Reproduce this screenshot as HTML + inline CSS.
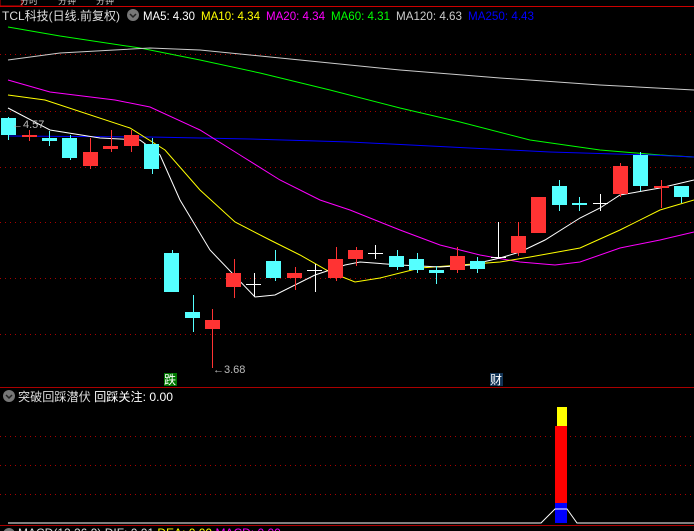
<!DOCTYPE html>
<html><head><meta charset="utf-8"><style>
body{margin:0;background:#000;width:694px;height:531px;overflow:hidden;font-family:"Liberation Sans","Noto Sans CJK SC",sans-serif}
</style></head><body>
<svg width="694" height="531" xmlns="http://www.w3.org/2000/svg" style="display:block">
<rect width="694" height="531" fill="#000"/>
<rect x="0" y="-2" width="22" height="8" fill="none" stroke="#c00"/>
<line x1="0" y1="6.5" x2="694" y2="6.5" stroke="#c00"/>
<text y="4" font-size="9" fill="#ccc">&#160;&#160;&#160;&#160;&#160;&#160;&#160;&#160;分时&#160;&#160;&#160;&#160;&#160;&#160;&#160;&#160;分钟&#160;&#160;&#160;&#160;&#160;&#160;&#160;&#160;分钟</text>
<g font-size="12">
<text x="2" y="20" fill="#ddd" textLength="118" lengthAdjust="spacingAndGlyphs">TCL科技(日线.前复权)</text>
<circle cx="133" cy="15" r="6" fill="#777"/>
<path d="M130 14l3 3 3-3" stroke="#222" stroke-width="1.5" fill="none"/>
<text x="143" y="20" fill="#fff" textLength="52" lengthAdjust="spacingAndGlyphs">MA5: 4.30</text>
<text x="201" y="20" fill="#ff0" textLength="59" lengthAdjust="spacingAndGlyphs">MA10: 4.34</text>
<text x="266" y="20" fill="#f0f" textLength="59" lengthAdjust="spacingAndGlyphs">MA20: 4.34</text>
<text x="331" y="20" fill="#0f0" textLength="59" lengthAdjust="spacingAndGlyphs">MA60: 4.31</text>
<text x="396" y="20" fill="#ccc" textLength="66" lengthAdjust="spacingAndGlyphs">MA120: 4.63</text>
<text x="468" y="20" fill="#00f" textLength="66" lengthAdjust="spacingAndGlyphs">MA250: 4.43</text>
</g>
<g stroke="#a00" stroke-dasharray="1 4">
<line x1="0" y1="54.5" x2="694" y2="54.5"/><line x1="0" y1="111.5" x2="694" y2="111.5"/>
<line x1="0" y1="167.5" x2="694" y2="167.5"/><line x1="0" y1="222.5" x2="694" y2="222.5"/>
<line x1="0" y1="278.5" x2="694" y2="278.5"/><line x1="0" y1="334.5" x2="694" y2="334.5"/>
<line x1="0" y1="436.5" x2="694" y2="436.5"/><line x1="0" y1="465.5" x2="694" y2="465.5"/>
<line x1="0" y1="494.5" x2="694" y2="494.5"/>
</g>
<g fill="none" stroke-width="1">
<polyline stroke="#0f0" points="8,27 60,36 140,48 200,60 260,73 330,90 400,108 460,122 530,140 600,150 660,155 694,157"/>
<polyline stroke="#ccc" points="8,60 60,53 150,48 200,50 300,60 400,70 500,78 600,85 694,90"/>
<polyline stroke="#00f" points="8,136 150,137 250,139 350,142 450,147 550,152 650,155 694,157"/>
<polyline stroke="#f0f" points="8,80 50,92 115,100 150,107 200,130 240,155 280,180 320,200 350,210 400,230 440,245 480,255 520,262 555,265 580,262 620,248 660,240 694,232"/>
<polyline stroke="#ff0" points="8,95 45,100 130,128 165,150 200,190 235,222 270,240 300,255 330,272 355,282 380,278 420,268 460,265 500,262 530,257 580,248 620,230 660,210 694,200"/>
<polyline stroke="#fff" points="8,108 50,130 100,138 140,140 160,155 180,200 210,250 255,297 275,295 315,275 345,265 360,262 400,265 440,267 470,265 500,258 520,252 545,240 580,218 600,208 620,195 660,188 694,180"/>
</g>
<g stroke-width="1">
<line x1="8.5" y1="117" x2="8.5" y2="140" stroke="#5ff"/><rect x="1" y="118" width="15" height="17" fill="#5ff"/>
<line x1="29.5" y1="130" x2="29.5" y2="141" stroke="#f33"/><rect x="22" y="135" width="15" height="2" fill="#f33"/>
<line x1="49.5" y1="131" x2="49.5" y2="146" stroke="#5ff"/><rect x="42" y="138" width="15" height="3" fill="#5ff"/>
<line x1="70.5" y1="135" x2="70.5" y2="160" stroke="#5ff"/><rect x="62" y="138" width="15" height="20" fill="#5ff"/>
<line x1="90.5" y1="138" x2="90.5" y2="169" stroke="#f33"/><rect x="83" y="152" width="15" height="14" fill="#f33"/>
<line x1="111.5" y1="130" x2="111.5" y2="152" stroke="#f33"/><rect x="103" y="146" width="15" height="3" fill="#f33"/>
<line x1="131.5" y1="130" x2="131.5" y2="152" stroke="#f33"/><rect x="124" y="135" width="15" height="11" fill="#f33"/>
<line x1="152.5" y1="138" x2="152.5" y2="174" stroke="#5ff"/><rect x="144" y="144" width="15" height="25" fill="#5ff"/>
<line x1="172.5" y1="250" x2="172.5" y2="292" stroke="#5ff"/><rect x="164" y="253" width="15" height="39" fill="#5ff"/>
<line x1="193.5" y1="295" x2="193.5" y2="332" stroke="#5ff"/><rect x="185" y="312" width="15" height="6" fill="#5ff"/>
<line x1="212.5" y1="309" x2="212.5" y2="368" stroke="#f33"/><rect x="205" y="320" width="15" height="9" fill="#f33"/>
<line x1="234.5" y1="259" x2="234.5" y2="298" stroke="#f33"/><rect x="226" y="273" width="15" height="14" fill="#f33"/>
<line x1="254.5" y1="273" x2="254.5" y2="297" stroke="#fff"/><line x1="246" y1="284.5" x2="261" y2="284.5" stroke="#fff"/>
<line x1="275.5" y1="250" x2="275.5" y2="281" stroke="#5ff"/><rect x="266" y="261" width="15" height="17" fill="#5ff"/>
<line x1="295.5" y1="267" x2="295.5" y2="290" stroke="#f33"/><rect x="287" y="273" width="15" height="5" fill="#f33"/>
<line x1="315.5" y1="264" x2="315.5" y2="292" stroke="#fff"/><line x1="307" y1="270.5" x2="322" y2="270.5" stroke="#fff"/>
<line x1="336.5" y1="247" x2="336.5" y2="281" stroke="#f33"/><rect x="328" y="259" width="15" height="19" fill="#f33"/>
<line x1="356.5" y1="247" x2="356.5" y2="266" stroke="#f33"/><rect x="348" y="250" width="15" height="9" fill="#f33"/>
<line x1="375.5" y1="245" x2="375.5" y2="259" stroke="#fff"/><line x1="368" y1="253.5" x2="383" y2="253.5" stroke="#fff"/>
<line x1="397.5" y1="250" x2="397.5" y2="270" stroke="#5ff"/><rect x="389" y="256" width="15" height="11" fill="#5ff"/>
<line x1="417.5" y1="253" x2="417.5" y2="273" stroke="#5ff"/><rect x="409" y="259" width="15" height="11" fill="#5ff"/>
<line x1="436.5" y1="266" x2="436.5" y2="284" stroke="#5ff"/><rect x="429" y="270" width="15" height="3" fill="#5ff"/>
<line x1="457.5" y1="247" x2="457.5" y2="273" stroke="#f33"/><rect x="450" y="256" width="15" height="14" fill="#f33"/>
<line x1="477.5" y1="257" x2="477.5" y2="273" stroke="#5ff"/><rect x="470" y="261" width="15" height="8" fill="#5ff"/>
<line x1="498.5" y1="222" x2="498.5" y2="258" stroke="#fff"/><line x1="491" y1="257.5" x2="506" y2="257.5" stroke="#fff"/>
<line x1="518.5" y1="222" x2="518.5" y2="256" stroke="#f33"/><rect x="511" y="236" width="15" height="17" fill="#f33"/>
<rect x="531" y="197" width="15" height="36" fill="#f33"/>
<line x1="559.5" y1="180" x2="559.5" y2="211" stroke="#5ff"/><rect x="552" y="186" width="15" height="19" fill="#5ff"/>
<line x1="579.5" y1="197" x2="579.5" y2="211" stroke="#5ff"/><rect x="572" y="203" width="15" height="2" fill="#5ff"/>
<line x1="600.5" y1="194" x2="600.5" y2="211" stroke="#fff"/><line x1="593" y1="203.5" x2="608" y2="203.5" stroke="#fff"/>
<line x1="620.5" y1="163" x2="620.5" y2="197" stroke="#f33"/><rect x="613" y="166" width="15" height="28" fill="#f33"/>
<line x1="640.5" y1="152" x2="640.5" y2="191" stroke="#5ff"/><rect x="633" y="155" width="15" height="31" fill="#5ff"/>
<line x1="661.5" y1="180" x2="661.5" y2="208" stroke="#f33"/><rect x="654" y="186" width="15" height="2" fill="#f33"/>
<line x1="681.5" y1="186" x2="681.5" y2="203" stroke="#5ff"/><rect x="674" y="186" width="15" height="11" fill="#5ff"/>
</g>
<g font-size="11" fill="#bbb">
<text x="12" y="128">←4.57</text>
<text x="213" y="373">←3.68</text>
</g>
<rect x="164" y="373" width="13" height="13" fill="#070"/><text x="164" y="384" font-size="12" fill="#fff">跌</text>
<rect x="490" y="373" width="13" height="13" fill="#135"/><text x="490" y="384" font-size="12" fill="#fff">财</text>
<line x1="0" y1="387.5" x2="694" y2="387.5" stroke="#a00"/>
<circle cx="9" cy="396" r="6" fill="#777"/><path d="M6 395l3 3 3-3" stroke="#222" stroke-width="1.5" fill="none"/>
<text x="18" y="401" font-size="12" fill="#ddd" textLength="155" lengthAdjust="spacingAndGlyphs">突破回踩潜伏 <tspan fill="#fff">回踩关注: 0.00</tspan></text>
<rect x="557" y="407" width="10" height="19" fill="#ff0"/>
<rect x="555" y="426" width="12" height="77" fill="#f00"/>
<rect x="555" y="503" width="12" height="20" fill="#00f"/>
<polyline points="8,523 541,523 555,509 567,509 577,523 694,523" fill="none" stroke="#fff"/>
<line x1="0" y1="525.5" x2="694" y2="525.5" stroke="#a00"/>
<circle cx="9" cy="534" r="6" fill="#777"/>
<text x="18" y="537" font-size="12" fill="#ddd">MACD(12,26,9) DIF: 0.01 <tspan fill="#ff0">DEA: 0.00</tspan> <tspan fill="#f0f">MACD: 0.00</tspan></text>
</svg>
</body></html>
